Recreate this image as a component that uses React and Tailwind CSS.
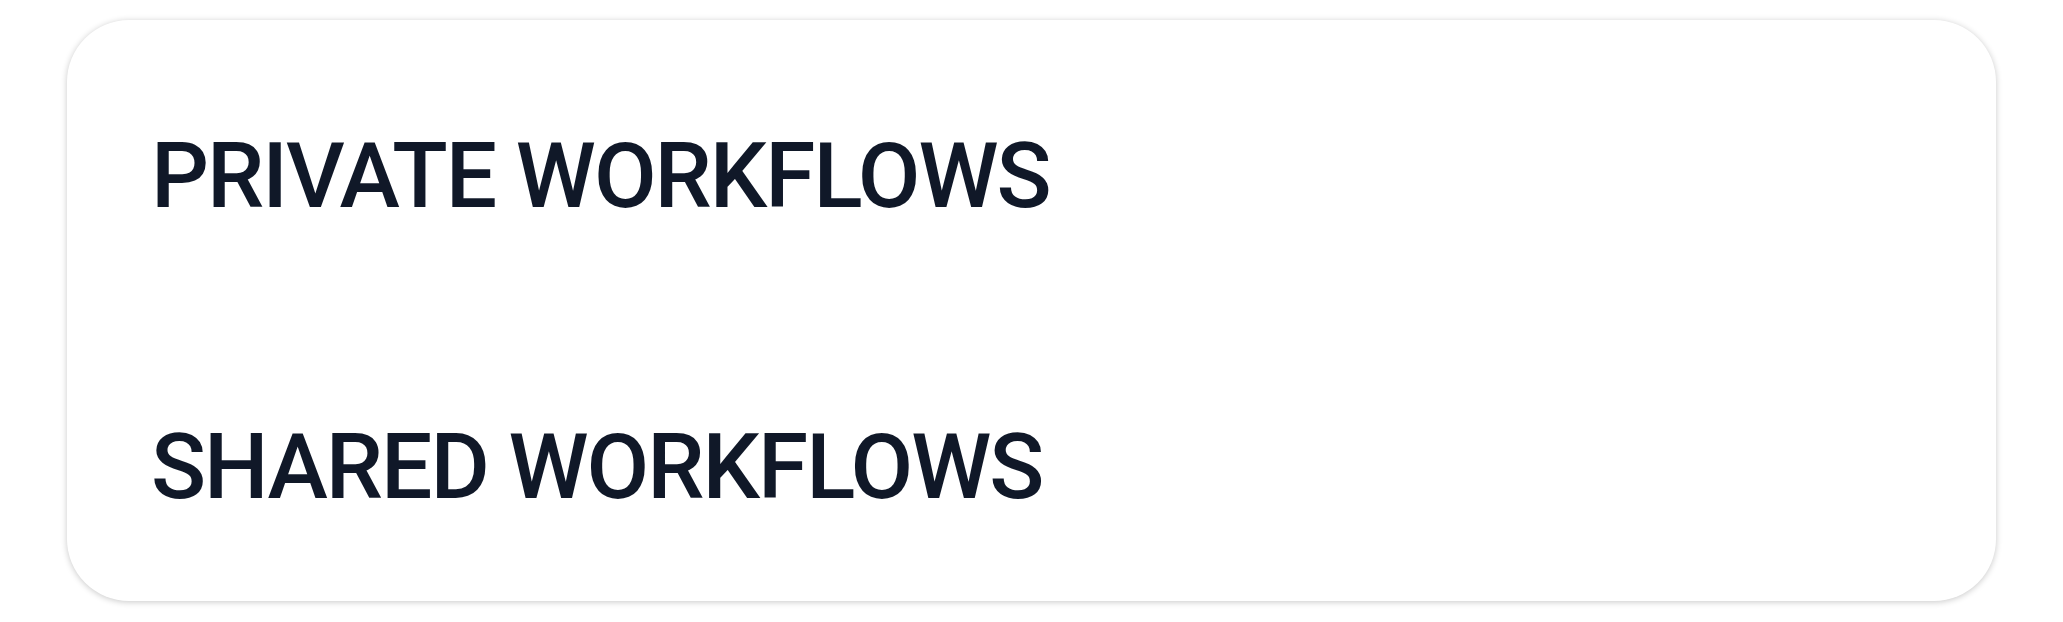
export default function App() {
  return (
    <div className="w-[2063px] h-[622px] bg-white px-[67px] pt-[20px]">
      <div
        className="h-[581px] rounded-[62px] bg-white shadow-[0_1px_6px_rgba(0,0,0,0.22)] pl-[84px] pt-[111px] flex flex-col gap-[200px] text-gray-900"
        style={{ fontFamily: 'Roboto, sans-serif' }}
      >
        <h2 className="text-[91px] leading-none font-medium tracking-[-2px]">PRIVATE WORKFLOWS</h2>
        <h2 className="text-[91px] leading-none font-medium tracking-[-2px]">SHARED WORKFLOWS</h2>
      </div>
    </div>
  )
}
